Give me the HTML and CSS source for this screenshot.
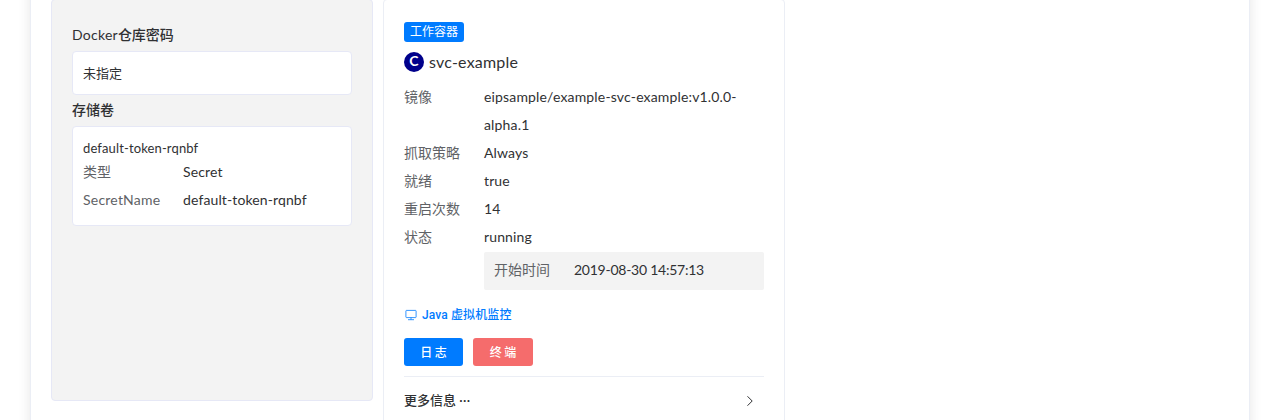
FILE: index.html
```html
<!DOCTYPE html>
<html lang="zh-CN">
<head>
<meta charset="utf-8">
<title>svc-example</title>
<link rel="stylesheet" href="styles.css">
</head>
<body>
<main class="page">
  <section class="pod">
    <h3 class="pod-title"><span class="pod-word">Docker</span>仓库密码</h3>
    <div class="box box-plain">未指定</div>
    <h3 class="pod-title">存储卷</h3>
    <div class="box box-volume">
      <div class="volume-name">default-token-rqnbf</div>
      <div class="row"><span class="label">类型</span><span class="value">Secret</span></div>
      <div class="row"><span class="label label-latin">SecretName</span><span class="value">default-token-rqnbf</span></div>
    </div>
  </section>
  <section class="container-card">
    <span class="tag">工作容器</span>
    <div class="name"><span class="badge">C</span><span>svc-example</span></div>
    <div class="row"><span class="label">镜像</span><span class="value image">eipsample/example-svc-example:v1.0.0-<br>alpha.1</span></div>
    <div class="row"><span class="label">抓取策略</span><span class="value">Always</span></div>
    <div class="row"><span class="label">就绪</span><span class="value">true</span></div>
    <div class="row"><span class="label">重启次数</span><span class="value">14</span></div>
    <div class="row"><span class="label">状态</span><span class="value">running</span></div>
    <div class="row state"><span class="label">开始时间</span><span class="value date">2019-08-30 14:57:13</span></div>
    <a class="link">
      <svg class="monitor" viewBox="0 0 12 12" fill="none" stroke="currentColor" stroke-width=".8"><rect x=".9" y="1.4" width="10.2" height="7.2" rx=".6"/><path d="M6 8.6v2M3 10.7h6"/></svg>
      <span>Java 虚拟机监控</span>
    </a>
    <div class="buttons"><button class="btn btn-log">日 志</button><button class="btn btn-term">终 端</button></div>
    <div class="more"><span>更多信息 <span class="dots">···</span></span>
      <svg class="chevron" viewBox="0 0 8 12" fill="none" stroke="#303133" stroke-width="1"><path d="M1.5 1.3 6.2 6 1.5 10.7"/></svg>
    </div>
  </section>
</main>
</body>
</html>
```
FILE: styles.css
```css
* { box-sizing: border-box; }
body {
  margin: 0;
  height: 420px;
  overflow: hidden;
  background: #fff;
  color: #303133;
  font: 14px/28px Lato, "Noto Sans CJK SC", sans-serif;
}
.page {
  display: flex;
  align-items: flex-start;
  gap: 10px;
  width: 1220px;
  height: 460px;
  margin: -21px 0 0 30px;
  padding: 19px 20px 0;
  border: 1px solid #ebeef5;
  box-shadow: 0 2px 12px rgba(0, 0, 0, .1);
}
.pod {
  width: 322px;
  height: 402px;
  padding: 22px 20px 0;
  background: #f3f3f3;
  border: 1px solid #e6e8f6;
  border-radius: 4px;
}
.pod-title {
  height: 29px;
  margin: 0;
  font-size: 14px;
  font-weight: 500;
  line-height: 26px;
}
.pod-word { font-weight: 400; letter-spacing: .25px; }
.box {
  width: 280px;
  padding: 0 10px;
  background: #fff;
  border: 1px solid #e6e8f6;
  border-radius: 4px;
}
.box-plain {
  height: 44px;
  margin-bottom: 2px;
  font-size: 13px;
  line-height: 42px;
}
.box-volume {
  height: 100px;
  padding-top: 12px;
}
.volume-name {
  height: 19px;
  font-size: 13px;
  line-height: 19px;
  letter-spacing: .13px;
}
.row { display: flex; }
.label { flex: none; width: 80px; color: #606266; }
.box-volume .label { width: 100px; }
.label-latin { letter-spacing: .22px; }
.value { letter-spacing: .12px; }
.image { letter-spacing: .16px; }
.container-card {
  display: flex;
  flex-direction: column;
  width: 402px;
  height: 440px;
  padding: 22px 20px 0;
  border: 1px solid #ebeef5;
  border-radius: 4px;
}
.tag {
  align-self: flex-start;
  width: 60px;
  height: 20px;
  border-radius: 3px;
  background: #007bff;
  color: #fff;
  font-size: 12px;
  line-height: 20px;
  text-align: center;
}
.name {
  display: flex;
  align-items: center;
  gap: 5px;
  height: 20px;
  margin: 10px 0 11px;
  font-size: 16px;
  letter-spacing: .2px;
}
.badge {
  width: 20px;
  height: 20px;
  border-radius: 50%;
  background: #00008b;
  color: #fff;
  font-size: 14px;
  font-weight: 700;
  line-height: 18px;
  text-align: center;
}
.state {
  width: 280px;
  height: 38px;
  margin: 1px 0 0 80px;
  padding: 4px 10px;
  background: #f3f3f3;
  border-radius: 2px;
}
.date { letter-spacing: -.25px; }
.link {
  display: flex;
  align-items: center;
  gap: 5px;
  height: 20px;
  margin: 15px 0 13px;
  padding-left: 1px;
  color: #007bff;
  font-size: 12px;
  font-weight: 500;
  font-family: Roboto, "Noto Sans CJK SC", sans-serif;
  letter-spacing: .12px;
}
.monitor { width: 12px; height: 12px; }
.buttons { display: flex; gap: 10px; }
.btn {
  width: 60px;
  height: 28px;
  padding: 0;
  border: 0;
  border-radius: 3px;
  color: #fff;
  font: 500 12px/28px "Noto Sans CJK SC", sans-serif;
}
.btn-log { width: 59px; background: #007bff; }
.btn-term { background: #f56c6c; }
.more {
  display: flex;
  align-items: center;
  justify-content: space-between;
  height: 49px;
  margin-top: 10px;
  padding-right: 10px;
  border-top: 1px solid #ebeef5;
  font-size: 13px;
  font-weight: 500;
}
.more > span { padding-bottom: 2px; }
.dots { font-weight: 400; letter-spacing: .4px; }
.chevron { width: 8px; height: 12px; }
```
